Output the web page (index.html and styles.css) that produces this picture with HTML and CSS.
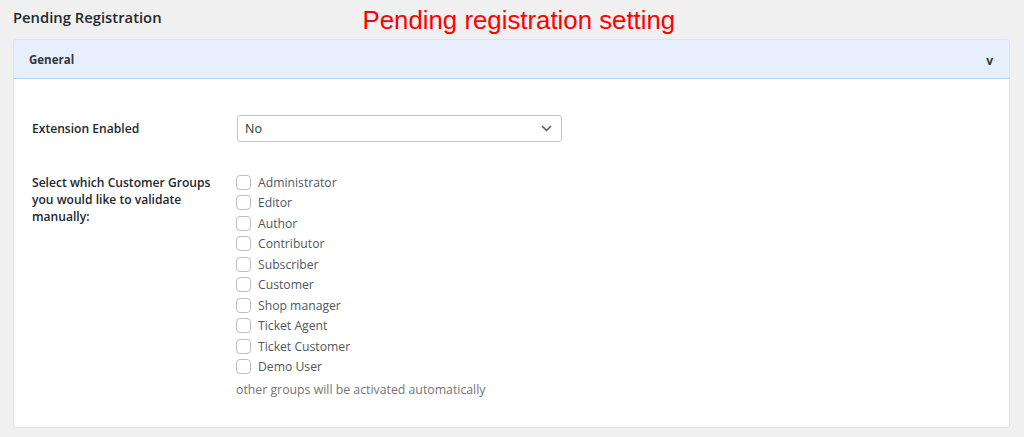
FILE: index.html
```html
<!DOCTYPE html>
<html>
<head>
<meta charset="utf-8">
<link rel="stylesheet" href="styles.css">
</head>
<body>
<div class="page">
  <div class="top">
    <h1 class="title">Pending Registration</h1>
    <div class="note">Pending registration setting</div>
  </div>
  <div class="card">
    <div class="card-head">
      <span class="head-label">General</span>
      <span class="head-toggle">v</span>
    </div>
    <div class="card-body">
      <div class="row row-select">
        <div class="label">Extension Enabled</div>
        <div class="field">
          <div class="select">
            <span>No</span>
            <svg class="chev" width="11" height="7" viewBox="0 0 11 7"><path d="M1 1l4.5 4.5L10 1" fill="none" stroke="#50575e" stroke-width="1.5"/></svg>
          </div>
        </div>
      </div>
      <div class="row row-groups">
        <div class="label">Select which Customer Groups you would like to validate manually:</div>
        <div class="field">
          <ul class="checks">
            <li><span class="box"></span>Administrator</li>
            <li><span class="box"></span>Editor</li>
            <li><span class="box"></span>Author</li>
            <li><span class="box"></span>Contributor</li>
            <li><span class="box"></span>Subscriber</li>
            <li><span class="box"></span>Customer</li>
            <li><span class="box"></span>Shop manager</li>
            <li><span class="box"></span>Ticket Agent</li>
            <li><span class="box"></span>Ticket Customer</li>
            <li><span class="box"></span>Demo User</li>
          </ul>
          <p class="hint">other groups will be activated automatically</p>
        </div>
      </div>
    </div>
  </div>
</div>
</body>
</html>
```

FILE: styles.css
```css
html, body {
  margin: 0;
  padding: 0;
  background: #f0f0f0;
  font-family: "Open Sans", "Noto Sans", sans-serif;
}

.page {
  padding: 0 14px 0 13px;
}

.top {
  height: 39px;
  display: flex;
  align-items: center;
}

.title {
  margin: 0;
  font-size: 14.8px;
  font-weight: 600;
  color: #23282d;
  position: relative;
  top: -3px;
}

.note {
  margin-left: 201px;
  font-family: "Liberation Sans", Arial, sans-serif;
  font-size: 25.8px;
  color: #ff0000;
  position: relative;
  top: 1px;
}

.card {
  background: #fff;
  border: 1px solid #e2e2e2;
  border-radius: 3px;
  overflow: hidden;
}

.card-head {
  height: 38px;
  background: #e7effc;
  border: 1px solid #b6d4f8;
  border-radius: 3px 3px 0 0;
  margin: -1px -1px 0 -1px;
  display: flex;
  align-items: center;
  justify-content: space-between;
  padding: 0 16px 0 15px;
}

.head-label {
  font-size: 11.5px;
  font-weight: 700;
  color: #32373c;
}

.head-toggle {
  font-size: 12px;
  font-weight: 700;
  color: #32373c;
  position: relative;
  top: 1px;
}

.card-body {
  padding: 36px 18px 27px 18px;
}

.row {
  display: grid;
  grid-template-columns: 205px 325px;
}

.row-select {
  align-items: center;
}

.row-groups {
  margin-top: 30px;
}

.label {
  font-size: 12.1px;
  font-weight: 600;
  color: #23282d;
  line-height: 17px;
  width: 192px;
}

.row-groups .label {
  padding-top: 2px;
}

.select {
  height: 25px;
  border: 1px solid #c3c4c7;
  border-radius: 3px;
  display: flex;
  align-items: center;
  justify-content: space-between;
  padding: 0 9px 0 7px;
  font-size: 12.5px;
  color: #2c3338;
}

.chev {
  display: block;
}

.checks {
  list-style: none;
  margin: 0;
  padding: 0;
}

.checks li {
  display: flex;
  align-items: center;
  height: 20.5px;
  font-size: 12.2px;
  color: #50575e;
  margin-left: -1px;
}

.box {
  width: 13px;
  height: 13px;
  border: 1px solid #bcc0c4;
  border-radius: 4px;
  margin-right: 7px;
  background: #fff;
}

.hint {
  margin: 3px 0 0 -1px;
  font-size: 12.3px;
  color: #757575;
  line-height: 20px;
}
```
